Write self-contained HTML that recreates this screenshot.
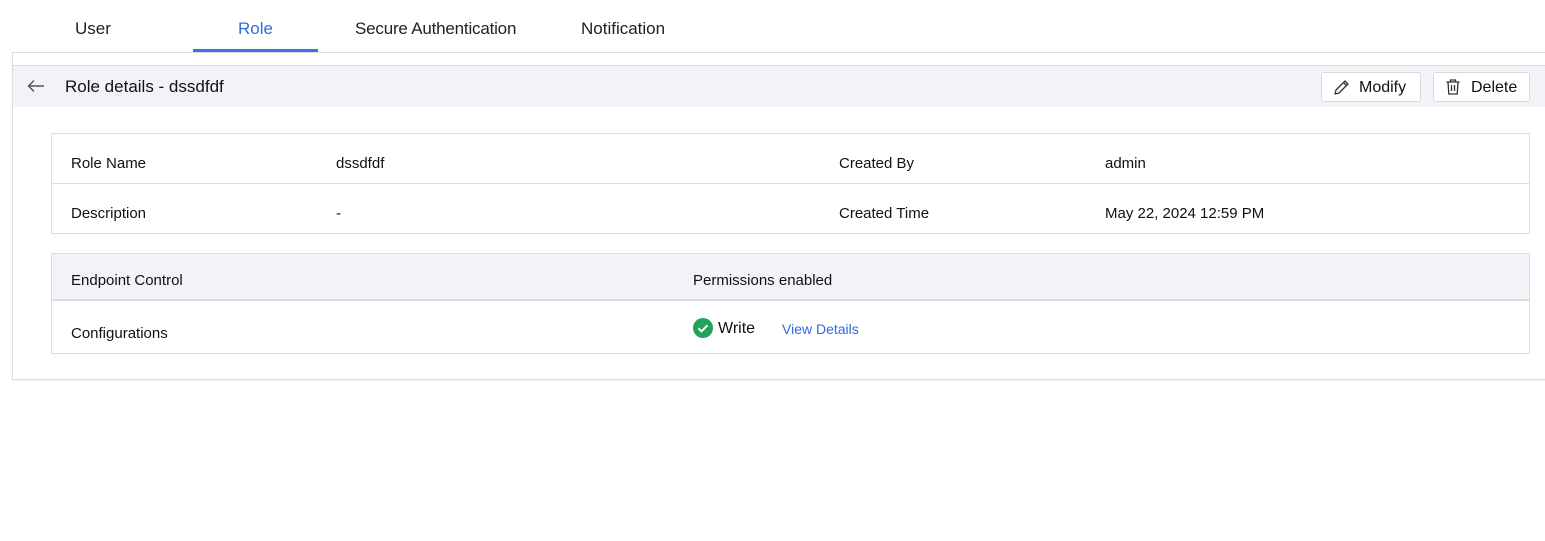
<!DOCTYPE html>
<html><head><style>
*{box-sizing:border-box;margin:0;padding:0}
body{width:1545px;height:541px;background:#fff;font-family:"Liberation Sans",sans-serif;color:#111;position:relative;overflow:hidden;font-size:15px}
.a{position:absolute;white-space:nowrap}
.tab{position:absolute;top:19px;font-size:17px;color:#222}
</style></head><body>
<div class="tab" style="left:75px">User</div>
<div class="tab" style="left:238px;color:#2f6be0">Role</div>
<div class="tab" style="left:355px;letter-spacing:-0.2px">Secure Authentication</div>
<div class="tab" style="left:581px">Notification</div>
<div class="a" style="left:193px;top:49px;width:125px;height:3px;background:#3b73e0"></div>
<div class="a" style="left:12px;top:52px;width:1540px;height:328px;border:1px solid #dcdde2;border-right:none;box-shadow:0 1px 2px rgba(0,0,0,.05)"></div>
<div class="a" style="left:13px;top:65px;width:1532px;height:42px;background:#f2f3f7;border-top:1px solid #dcdde2"></div>
<svg class="a" style="left:27px;top:79px" width="18" height="14" viewBox="0 0 18 14"><path d="M17 7H2M7 1.5L1.5 7 7 12.5" stroke="#555" stroke-width="1.4" fill="none"/></svg>
<div class="a" style="left:65px;top:77px;font-size:17px">Role details - dssdfdf</div>
<div class="a" style="left:1321px;top:72px;width:100px;height:30px;background:#fff;border:1px solid #d8d9de;border-radius:3px"></div>
<svg class="a" style="left:1333px;top:79px" width="17" height="17" viewBox="0 0 17 17"><path d="M2 15l1-4L12 2l3 3-9 9z M10.5 3.5l3 3" stroke="#333" stroke-width="1.3" fill="none" stroke-linejoin="round"/></svg>
<div class="a" style="left:1359px;top:79px;font-size:16px">Modify</div>
<div class="a" style="left:1433px;top:72px;width:97px;height:30px;background:#fff;border:1px solid #d8d9de;border-radius:3px"></div>
<svg class="a" style="left:1445px;top:78px" width="16" height="18" viewBox="0 0 16 18"><path d="M1.5 4h13M5.5 4V2h5v2M3 4l.8 12h8.4L13 4M6.5 7v6M9.5 7v6" stroke="#333" stroke-width="1.3" fill="none"/></svg>
<div class="a" style="left:1471px;top:79px;font-size:16px">Delete</div>

<div class="a" style="left:51px;top:133px;width:1479px;height:101px;border:1px solid #dcdde2"></div>
<div class="a" style="left:52px;top:183px;width:1477px;height:1px;background:#dcdde2"></div>
<div class="a" style="left:71px;top:155px">Role Name</div>
<div class="a" style="left:336px;top:155px">dssdfdf</div>
<div class="a" style="left:839px;top:155px">Created By</div>
<div class="a" style="left:1105px;top:155px">admin</div>
<div class="a" style="left:71px;top:205px">Description</div>
<div class="a" style="left:336px;top:205px">-</div>
<div class="a" style="left:839px;top:205px">Created Time</div>
<div class="a" style="left:1105px;top:205px">May 22, 2024 12:59 PM</div>

<div class="a" style="left:51px;top:253px;width:1479px;height:101px;border:1px solid #dcdde2"></div>
<div class="a" style="left:52px;top:254px;width:1477px;height:47px;background:#f2f3f7;border-bottom:2px solid #dcdde2"></div>
<div class="a" style="left:71px;top:272px">Endpoint Control</div>
<div class="a" style="left:693px;top:272px">Permissions enabled</div>
<div class="a" style="left:71px;top:325px">Configurations</div>
<svg class="a" style="left:693px;top:318px" width="20" height="20" viewBox="0 0 20 20"><circle cx="10" cy="10" r="10" fill="#22a359"/><path d="M5.5 10.3l3 3 6-6" stroke="#fff" stroke-width="2" fill="none"/></svg>
<div class="a" style="left:718px;top:320px;font-size:16px">Write</div>
<div class="a" style="left:782px;top:321px;font-size:14px;color:#2f6be0">View Details</div>
</body></html>
